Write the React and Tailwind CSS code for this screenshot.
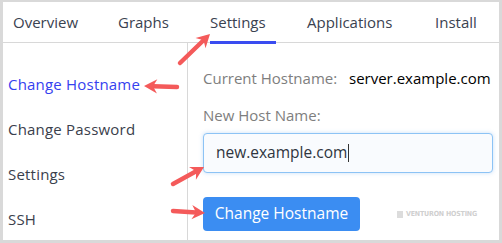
import React from "react";

const Arrow = ({ x1, y1, x2, y2 }) => {
  const ang = Math.atan2(y2 - y1, x2 - x1);
  const L = 15, W = 0.5;
  const ax = x2 - L * Math.cos(ang - W), ay = y2 - L * Math.sin(ang - W);
  const bx = x2 - L * Math.cos(ang + W), by = y2 - L * Math.sin(ang + W);
  const mx = x2 - 9 * Math.cos(ang), my = y2 - 9 * Math.sin(ang);
  return (
    <g>
      <line x1={x1} y1={y1} x2={mx} y2={my} stroke="#f45a5a" strokeWidth="4.5" strokeLinecap="round" />
      <polygon points={`${x2},${y2} ${ax},${ay} ${mx},${my} ${bx},${by}`} fill="#f45a5a" />
    </g>
  );
};

export default function App() {
  const font = { fontFamily: '"Open Sans", "Noto Sans", sans-serif' };
  return (
    <div className="relative w-[502px] h-[243px] overflow-hidden bg-white border-l-[3px] border-r-[3px] border-t-2 border-b-[3px] border-[#d9d9d9]" style={font}>
      <div className="flex h-[41px] border-b border-[#d8d8d8] text-[15px] text-[#3a4250] font-medium">
        <div className="pl-[10px] w-[110px] pt-[9px]">Overview</div>
        <div className="pl-[5px] w-[92px] pt-[9px]">Graphs</div>
        <div className="relative w-[102px] pt-[9px]">
          <span className="pl-[5px]">Settings</span>
          <div className="absolute left-[5px] bottom-[-2px] w-[66px] h-[3px] bg-[#3a4cf0]" />
        </div>
        <div className="w-[128px] pt-[9px]">Applications</div>
        <div className="pt-[9px]">Install</div>
      </div>
      <div className="flex h-[199px]">
        <div className="w-[186px] border-r border-[#d8d8d8] pt-[19px] pl-[5px] text-[15px] tracking-[0.2px] text-[#3a404c] font-medium">
          <div className="h-[45px] leading-[45px] text-[#3541ef]">Change Hostname</div>
          <div className="h-[45px] leading-[45px]">Change Password</div>
          <div className="h-[45px] leading-[45px]">Settings</div>
          <div className="h-[45px] leading-[45px]">SSH</div>
        </div>
        <div className="flex-1 pl-[15px] pr-[6px]">
          <div className="flex items-center h-[20px] mt-[25px] text-[15px]">
            <span className="text-[#7e7e7e] w-[146px]">Current Hostname:</span>
            <span className="text-black">server.example.com</span>
          </div>
          <div className="h-[20px] mt-[17px] text-[15px] text-[#7e7e7e] flex items-center">New Host Name:</div>
          <div className="mt-[8px] h-[40px] w-[290px] rounded-[4px] border border-[#8cc3f5] bg-[#f9fbfe] shadow-[0_0_4px_rgba(100,160,230,0.35)] flex items-center pl-[12px] text-[15.5px] text-[#2f3540]">
            new.example.com<span className="inline-block w-px h-[18px] bg-[#333] ml-px" />
          </div>
          <div className="flex items-center mt-[24px]">
            <div className="h-[34px] w-[157px] rounded-[4px] bg-[#3b8df2] text-white text-[15.5px] font-medium flex items-center justify-center">Change Hostname</div>
            <div className="ml-[37px] text-[7px] font-bold tracking-tight text-[#cfcfcf] flex items-center gap-[3px]" style={{ fontFamily: '"Liberation Sans Narrow", "DejaVu Sans Condensed", "Liberation Sans", sans-serif' }}>
              <span className="inline-block w-[6px] h-[7px] bg-[#dcdcdc]" />VENTURON HOSTING
            </div>
          </div>
        </div>
      </div>
      <svg className="absolute left-[-3px] top-[-2px] pointer-events-none" width="502" height="243">
        <Arrow x1={180} y1={63} x2={210} y2={34} />
        <Arrow x1={177} y1={87} x2={144} y2={86} />
        <Arrow x1={173} y1={184} x2={204} y2={167} />
        <Arrow x1={173} y1={211} x2={205} y2={213} />
      </svg>
    </div>
  );
}
